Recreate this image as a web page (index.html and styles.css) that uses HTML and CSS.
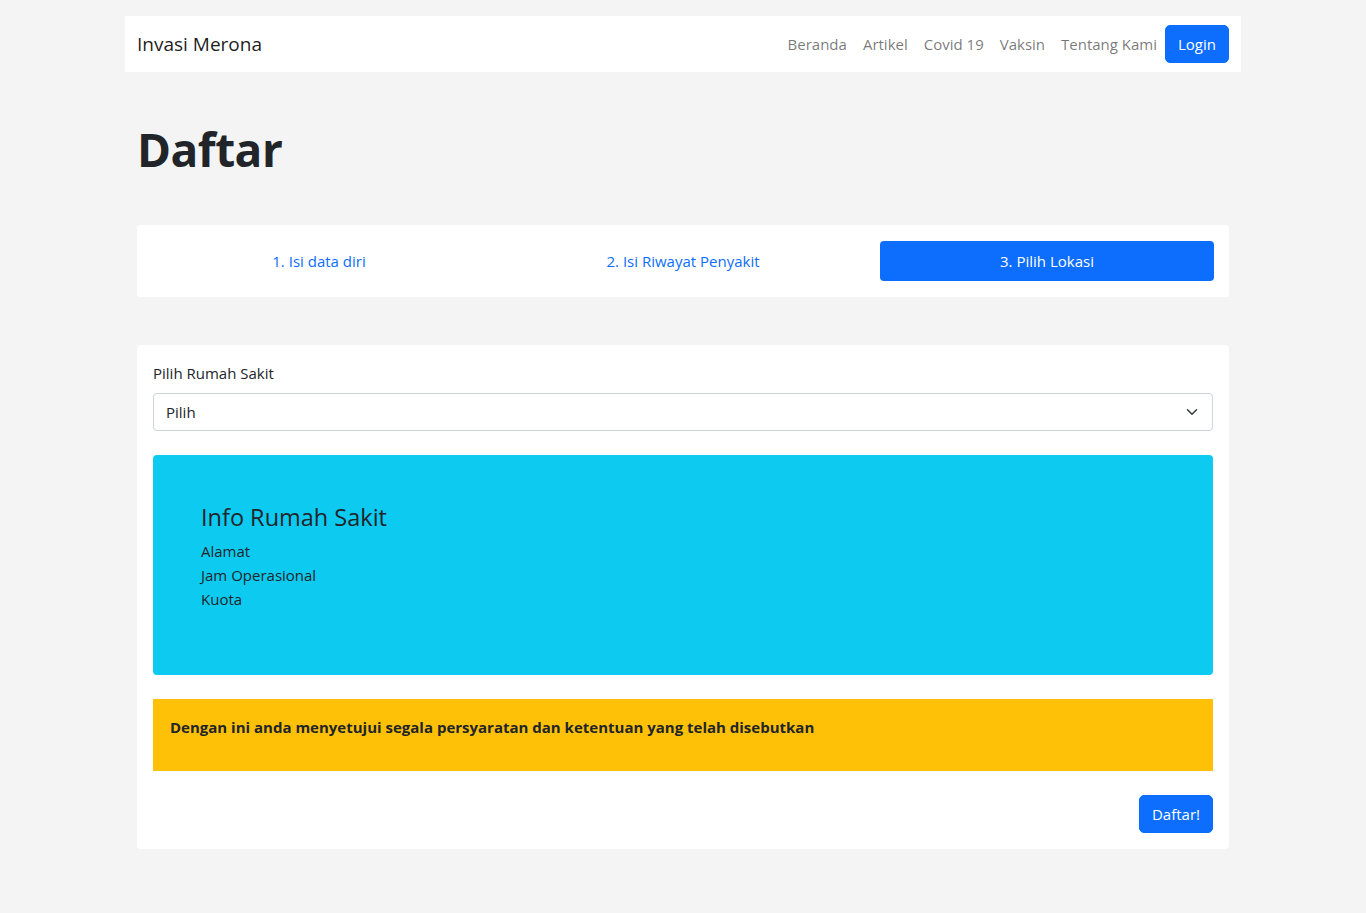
FILE: index.html
```html
<!DOCTYPE html>
<html lang="id">
<head>
<meta charset="utf-8">
<title>Daftar - Invasi Merona</title>
<link rel="stylesheet" href="styles.css">
</head>
<body>
<div class="container">
  <nav class="navbar">
    <a class="brand" href="#">Invasi Merona</a>
    <ul class="nav">
      <li><a class="nav-link" href="#">Beranda</a></li>
      <li><a class="nav-link" href="#">Artikel</a></li>
      <li><a class="nav-link" href="#">Covid 19</a></li>
      <li><a class="nav-link" href="#">Vaksin</a></li>
      <li><a class="nav-link" href="#">Tentang Kami</a></li>
      <li><a class="btn btn-primary" href="#">Login</a></li>
    </ul>
  </nav>

  <main class="content">
    <h1 class="title">Daftar</h1>

    <div class="steps">
      <div class="step"><a class="step-link" href="#">1. Isi data diri</a></div>
      <div class="step"><a class="step-link" href="#">2. Isi Riwayat Penyakit</a></div>
      <div class="step"><a class="step-link active" href="#">3. Pilih Lokasi</a></div>
    </div>

    <form class="form-card">
      <label class="form-label" for="rs">Pilih Rumah Sakit</label>
      <div class="select-wrap">
        <select id="rs" class="form-select">
          <option>Pilih</option>
        </select>
        <svg class="select-arrow" viewBox="0 0 16 16" width="16" height="12" aria-hidden="true">
          <path d="m2 5 6 6 6-6" fill="none" stroke="#343a40" stroke-width="2" stroke-linecap="round" stroke-linejoin="round"/>
        </svg>
      </div>

      <div class="info-box">
        <h4 class="info-title">Info Rumah Sakit</h4>
        <p class="info-text">Alamat<br>Jam Operasional<br>Kuota</p>
      </div>

      <div class="warning-box">
        <p>Dengan ini anda menyetujui segala persyaratan dan ketentuan yang telah disebutkan</p>
      </div>

      <div class="actions">
        <button type="button" class="btn btn-primary">Daftar!</button>
      </div>
    </form>
  </main>
</div>
</body>
</html>
```

FILE: styles.css
```css
* { box-sizing: border-box; }

html, body {
  margin: 0;
  padding: 0;
}

body {
  background: #f4f4f4;
  color: #212529;
  font-family: "Open Sans", "Noto Sans", sans-serif;
  font-size: 15px;
  line-height: 24px;
}

a { text-decoration: none; }

.container {
  max-width: 1140px;
  margin: 0 auto;
  padding: 16px 12px 0;
}

.navbar {
  background: #fff;
  height: 56px;
  padding: 8px 12px;
  display: flex;
  align-items: center;
  justify-content: space-between;
}

.brand {
  color: rgba(0, 0, 0, 0.9);
  font-size: 19px;
  line-height: 30px;
}

.nav {
  list-style: none;
  margin: 0;
  padding: 0;
  display: flex;
  align-items: center;
}

.nav-link {
  display: block;
  padding: 8px;
  color: rgba(0, 0, 0, 0.55);
}

.btn {
  display: inline-block;
  border: 1px solid transparent;
  border-radius: 5px;
  padding: 6px 12px;
  font-family: inherit;
  font-size: 15px;
  line-height: 24px;
  cursor: pointer;
}

.btn-primary {
  background: #0d6efd;
  border-color: #0d6efd;
  color: #fff;
}

.content {
  padding: 0 12px;
}

.title {
  margin: 48px 0 47px;
  font-size: 46px;
  line-height: 58px;
  font-weight: 700;
  letter-spacing: -0.5px;
}

.steps {
  background: #fff;
  border-radius: 3px;
  display: grid;
  grid-template-columns: repeat(3, 1fr);
  padding: 16px 0;
}

.step {
  padding: 0 15px;
}

.step-link {
  display: block;
  text-align: center;
  color: #0d6efd;
  padding: 8px 16px;
  border-radius: 4px;
}

.step-link.active {
  background: #0d6efd;
  color: #fff;
}

.form-card {
  margin-top: 48px;
  background: #fff;
  border-radius: 4px;
  padding: 16px;
}

.form-label {
  display: block;
  margin-bottom: 8px;
}

.select-wrap {
  position: relative;
}

.form-select {
  display: block;
  width: 100%;
  height: 38px;
  padding: 6px 36px 6px 12px;
  font-family: inherit;
  font-size: 15px;
  line-height: 24px;
  color: #212529;
  background: #fff;
  border: 1px solid #ced4da;
  border-radius: 4px;
  appearance: none;
  -webkit-appearance: none;
}

.select-arrow {
  position: absolute;
  right: 13px;
  top: 13px;
  pointer-events: none;
}

.info-box {
  margin-top: 24px;
  background: #0dcaf0;
  border-radius: 4px;
  padding: 48px;
}

.info-title {
  margin: 0 0 8px;
  font-size: 23.5px;
  line-height: 28px;
  font-weight: 500;
}

.info-text {
  margin: 0 0 16px;
}

.warning-box {
  margin-top: 24px;
  background: #ffc107;
  padding: 16px 17px;
}

.warning-box p {
  margin: 0 0 16px;
  font-weight: 700;
  font-size: 15px;
}

.actions {
  margin-top: 24px;
  display: flex;
  justify-content: flex-end;
}
```
